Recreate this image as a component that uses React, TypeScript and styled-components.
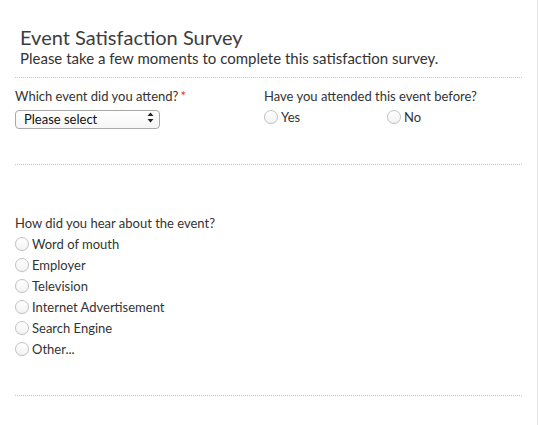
import React from "react";
import styled, { createGlobalStyle } from "styled-components";

const GlobalStyle = createGlobalStyle`
  html, body {
    margin: 0;
    padding: 0;
    background: #ffffff;
  }
  body {
    font-family: Lato, "Open Sans", sans-serif;
    color: #333333;
  }
`;

const Page = styled.div`
  width: 538px;
  min-height: 425px;
  box-sizing: border-box;
  border-right: 1px solid #e6e6e6;
  padding: 25px 15px 0 15px;
`;

const Header = styled.header`
  padding-left: 5px;
`;

const Title = styled.h1`
  margin: 0;
  font-size: 20px;
  line-height: 24px;
  font-weight: 400;
  color: #3d3d3d;
`;

const Subtitle = styled.p`
  margin: 0;
  font-size: 15px;
  line-height: 18px;
  color: #333333;
`;

const Divider = styled.hr<{ $gapTop: number; $gapBottom: number }>`
  border: 0;
  border-top: 1px dotted #c4c4c4;
  height: 0;
  margin: ${({ $gapTop, $gapBottom }) => `${$gapTop}px 0 ${$gapBottom}px 0`};
`;

const Row = styled.div`
  display: grid;
  grid-template-columns: 249px 1fr;
`;

const Field = styled.div`
  display: flex;
  flex-direction: column;
`;

const Label = styled.label`
  font-size: 13px;
  line-height: 16px;
  color: #333333;
`;

const Required = styled.span`
  color: #e0301e;
  margin-left: 2px;
`;

const SelectWrap = styled.div`
  position: relative;
  width: 145px;
  margin-top: 4px;
`;

const Select = styled.select`
  appearance: none;
  -webkit-appearance: none;
  width: 100%;
  height: 19px;
  box-sizing: border-box;
  border: 1px solid #a9a9a9;
  border-radius: 4px;
  background: linear-gradient(#ffffff, #f6f6f6);
  padding: 0 18px 0 8px;
  font-family: Lato, "Open Sans", sans-serif;
  font-size: 13px;
  line-height: 17px;
  color: #111111;
  outline: none;
`;

const Arrows = styled.svg`
  position: absolute;
  right: 6px;
  top: 4px;
  pointer-events: none;
`;

const InlineOptions = styled.div`
  display: flex;
  margin-top: 2px;
`;

const Option = styled.label<{ $width?: number }>`
  display: flex;
  align-items: center;
  gap: 3px;
  height: 21px;
  font-size: 13px;
  color: #333333;
  width: ${({ $width }) => ($width ? `${$width}px` : "auto")};
`;

const Radio = styled.span`
  display: inline-block;
  width: 14px;
  height: 14px;
  box-sizing: border-box;
  border-radius: 50%;
  border: 1px solid #c2c2c2;
  background: linear-gradient(#ffffff, #f3f3f3);
  box-shadow: 0 0.5px 0.5px rgba(0, 0, 0, 0.08);
  flex-shrink: 0;
`;

const OptionList = styled.div`
  display: flex;
  flex-direction: column;
  margin-top: 2px;
`;

const sources = [
  "Word of mouth",
  "Employer",
  "Television",
  "Internet Advertisement",
  "Search Engine",
  "Other...",
];

export default function App() {
  return (
    <>
      <GlobalStyle />
      <Page>
        <Header>
          <Title>Event Satisfaction Survey</Title>
          <Subtitle>
            Please take a few moments to complete this satisfaction survey.
          </Subtitle>
        </Header>

        <Divider $gapTop={10} $gapBottom={10} />

        <Row>
          <Field>
            <Label>
              Which event did you attend?<Required>*</Required>
            </Label>
            <SelectWrap>
              <Select defaultValue="">
                <option value="">Please select</option>
              </Select>
              <Arrows width="7" height="11" viewBox="0 0 7 11">
                <path d="M3.5 0.5 L6.5 4 H0.5 Z" fill="#222" />
                <path d="M3.5 10.5 L6.5 7 H0.5 Z" fill="#222" />
              </Arrows>
            </SelectWrap>
          </Field>
          <Field>
            <Label>Have you attended this event before?</Label>
            <InlineOptions>
              <Option $width={123}>
                <Radio />
                Yes
              </Option>
              <Option>
                <Radio />
                No
              </Option>
            </InlineOptions>
          </Field>
        </Row>

        <Divider $gapTop={35} $gapBottom={50} />

        <Field>
          <Label>How did you hear about the event?</Label>
          <OptionList>
            {sources.map((s) => (
              <Option key={s}>
                <Radio />
                {s}
              </Option>
            ))}
          </OptionList>
        </Field>

        <Divider $gapTop={36} $gapBottom={0} />
      </Page>
    </>
  );
}
